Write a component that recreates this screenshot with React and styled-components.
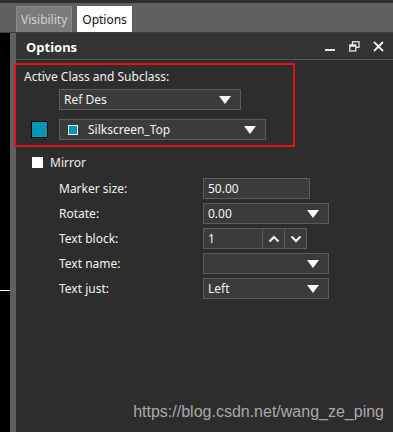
import React from 'react';
import styled, { createGlobalStyle } from 'styled-components';

const Global = createGlobalStyle`
  html, body { margin: 0; padding: 0; background: #2d2d2d; overflow: hidden; }
  body { font-family: "Noto Sans", "Open Sans", sans-serif; }
`;

const Screen = styled.div`
  position: relative;
  width: 393px;
  height: 432px;
  display: flex;
  flex-direction: column;
  background: #2d2d2d;
  overflow: hidden;
`;

const TopEdge = styled.div`
  height: 3px;
  background: #2e2e2e;
`;

const TabBar = styled.div`
  height: 29px;
  background: #606060;
  display: flex;
  align-items: flex-end;
  gap: 5px;
  padding-left: 16px;
  border-bottom: 1px solid #3a3a3a;
`;

const Tab = styled.div`
  height: 25px;
  padding: 0 4px;
  display: flex;
  align-items: center;
  font-size: 12px;
  border: 1px solid ${p => (p.$active ? '#ffffff' : '#8a8a8a')};
  border-bottom: none;
  background: ${p => (p.$active ? '#ffffff' : '#7b7b7b')};
  color: ${p => (p.$active ? '#111111' : '#d0d0d0')};
`;

const Body = styled.div`
  flex: 1;
  display: flex;
`;

const Ruler = styled.div`
  width: 10px;
  background: #000;
  display: flex;
  flex-direction: column;
  &::before {
    content: '';
    height: 257px;
  }
  &::after {
    content: '';
    height: 1px;
    background: #ffffff;
  }
`;

const Gutter = styled.div`
  width: 6px;
  background: #606060;
`;

const Panel = styled.div`
  flex: 1;
  display: flex;
  flex-direction: column;
  background: #2d2d2d;
`;

const Header = styled.div`
  height: 26px;
  display: flex;
  align-items: center;
  background: #333333;
  border-bottom: 1px solid #555555;
  padding: 0 3px 0 10px;
  color: #ffffff;
`;

const Title = styled.div`
  flex: 1;
  font-weight: 700;
  font-size: 13px;
  padding-top: 1px;
`;

const HeadBtn = styled.div`
  width: 24px;
  height: 20px;
  display: flex;
  align-items: center;
  justify-content: center;
`;

const RedBox = styled.div`
  margin: 3px 0 0 -2px;
  width: 277px;
  height: 80px;
  border: 2px solid #e3111b;
  display: flex;
  flex-direction: column;
`;

const Label = styled.div`
  font-size: 12px;
  color: #f2f2f2;
  white-space: nowrap;
`;

const BoxTitle = styled(Label)`
  padding: 3px 0 0 8px;
  height: 18px;
`;

const Row = styled.div`
  display: flex;
  align-items: center;
  padding-left: ${p => p.$indent}px;
  margin-top: ${p => p.$top || 0}px;
  gap: ${p => p.$gap || 0}px;
`;

const Swatch = styled.div`
  width: 15px;
  height: 15px;
  background: #0097b7;
  border: 1px solid #000;
`;

const Field = styled.div`
  box-sizing: border-box;
  width: ${p => p.$w}px;
  height: ${p => p.$h || 21}px;
  display: flex;
  align-items: center;
  background: #3b3b3b;
  border: 1px solid #5c5c5c;
  color: #f4f4f4;
  font-size: 12px;
  padding-left: 4px;
`;

const FieldText = styled.span`
  flex: 1;
  white-space: nowrap;
`;

const MiniSquare = styled.span`
  width: 8px;
  height: 8px;
  border: 1px solid #f0f0f0;
  background: #0097b7;
  margin: 0 10px 0 4px;
`;

const Arrow = styled.span`
  width: 0;
  height: 0;
  border-left: 6px solid transparent;
  border-right: 6px solid transparent;
  border-top: 8px solid #ffffff;
  margin-right: ${p => p.$mr || 9}px;
`;

const Check = styled.div`
  width: 11px;
  height: 11px;
  background: #ffffff;
`;

const Form = styled.div`
  display: grid;
  grid-template-columns: 144px auto;
  row-gap: 4px;
  align-items: center;
  padding-left: 43px;
  margin-top: 7px;
`;

const Spin = styled.div`
  display: flex;
`;

const SpinBtn = styled.div`
  box-sizing: border-box;
  width: 22px;
  height: 21px;
  border: 1px solid #5c5c5c;
  border-left: none;
  background: #3b3b3b;
  display: flex;
  align-items: center;
  justify-content: center;
`;

const Watermark = styled.div`
  position: absolute;
  right: 9px;
  bottom: 11px;
  font-family: "Liberation Sans", Arial, sans-serif;
  font-size: 16px;
  color: #a9a9a9;
`;

function Chevron({ up }) {
  return (
    <svg width="12" height="8" viewBox="0 0 12 8">
      <path d={up ? 'M1.5 6.5 L6 2 L10.5 6.5' : 'M1.5 1.5 L6 6 L10.5 1.5'} stroke="#fff" strokeWidth="2" fill="none" />
    </svg>
  );
}

function Select({ w, value, mr }) {
  return (
    <Field $w={w}>
      <FieldText>{value}</FieldText>
      <Arrow $mr={mr} />
    </Field>
  );
}

export default function App() {
  return (
    <Screen>
      <Global />
      <TopEdge />
      <TabBar>
        <Tab>Visibility</Tab>
        <Tab $active>Options</Tab>
      </TabBar>
      <Body>
        <Ruler />
        <Gutter />
        <Panel>
          <Header>
            <Title>Options</Title>
            <HeadBtn>
              <svg width="11" height="11" viewBox="0 0 11 11"><rect x="0" y="8" width="10" height="2" fill="#e8e8e8" /></svg>
            </HeadBtn>
            <HeadBtn>
              <svg width="11" height="11" viewBox="0 0 11 11" fill="none" stroke="#e8e8e8" strokeWidth="1.3">
                <rect x="3.5" y="0.8" width="6.5" height="5.5" />
                <rect x="0.8" y="4" width="6" height="6" fill="#333" />
                <line x1="0.8" y1="4.8" x2="6.8" y2="4.8" strokeWidth="2" />
              </svg>
            </HeadBtn>
            <HeadBtn>
              <svg width="11" height="11" viewBox="0 0 11 11"><path d="M1 1 L10 10 M10 1 L1 10" stroke="#f0f0f0" strokeWidth="1.8" /></svg>
            </HeadBtn>
          </Header>
          <RedBox>
            <BoxTitle>Active Class and Subclass:</BoxTitle>
            <Row $indent={43} $top={3}>
              <Select w={182} value="Ref Des" />
            </Row>
            <Row $indent={15} $top={9} $gap={11}>
              <Swatch />
              <Field $w={207}>
                <MiniSquare />
                <FieldText>Silkscreen_Top</FieldText>
                <Arrow $mr={9} />
              </Field>
            </Row>
          </RedBox>
          <Row $indent={16} $top={7} $gap={7}>
            <Check />
            <Label>Mirror</Label>
          </Row>
          <Form>
            <Label>Marker size:</Label>
            <Field $w={107}>50.00</Field>
            <Label>Rotate:</Label>
            <Select w={126} value="0.00" />
            <Label>Text block:</Label>
            <Spin>
              <Field $w={60}>1</Field>
              <SpinBtn><Chevron up /></SpinBtn>
              <SpinBtn><Chevron /></SpinBtn>
            </Spin>
            <Label>Text name:</Label>
            <Select w={126} value="" />
            <Label>Text just:</Label>
            <Select w={126} value="Left" />
          </Form>
        </Panel>
      </Body>
      <Watermark>https://blog.csdn.net/wang_ze_ping</Watermark>
    </Screen>
  );
}
